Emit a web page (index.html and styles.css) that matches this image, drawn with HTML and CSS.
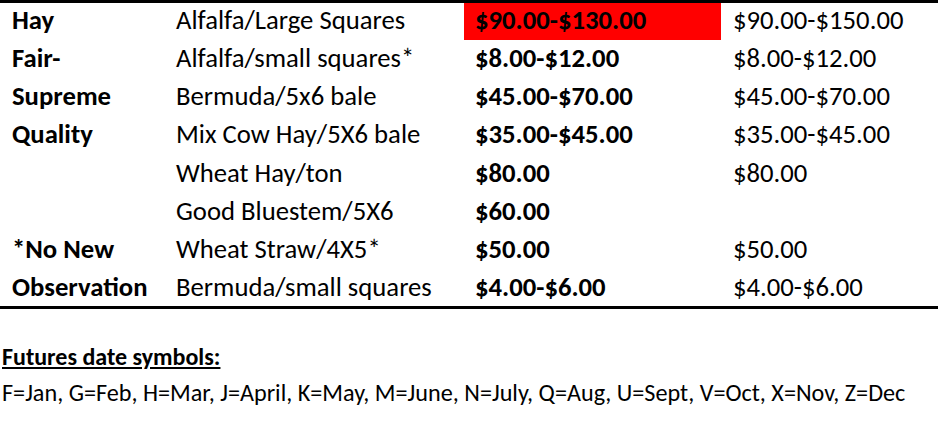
FILE: index.html
```html
<!DOCTYPE html>
<html>
<head>
<meta charset="utf-8">
<link rel="stylesheet" href="styles.css">
</head>
<body>
<table class="hay">
  <colgroup>
    <col class="c1"><col class="c2"><col class="c3"><col class="c4">
  </colgroup>
  <tr><td class="cat">Hay</td><td>Alfalfa/Large Squares</td><td class="cur hot">$90.00-$130.00</td><td>$90.00-$150.00</td></tr>
  <tr><td class="cat">Fair-</td><td>Alfalfa/small squares*</td><td class="cur">$8.00-$12.00</td><td>$8.00-$12.00</td></tr>
  <tr><td class="cat">Supreme</td><td>Bermuda/5x6 bale</td><td class="cur">$45.00-$70.00</td><td>$45.00-$70.00</td></tr>
  <tr><td class="cat">Quality</td><td>Mix Cow Hay/5X6 bale</td><td class="cur">$35.00-$45.00</td><td>$35.00-$45.00</td></tr>
  <tr><td class="cat"></td><td>Wheat Hay/ton</td><td class="cur">$80.00</td><td>$80.00</td></tr>
  <tr><td class="cat"></td><td>Good Bluestem/5X6</td><td class="cur">$60.00</td><td></td></tr>
  <tr><td class="cat">*No New</td><td>Wheat Straw/4X5*</td><td class="cur">$50.00</td><td>$50.00</td></tr>
  <tr><td class="cat">Observation</td><td>Bermuda/small squares</td><td class="cur">$4.00-$6.00</td><td>$4.00-$6.00</td></tr>
</table>
<div class="notes">
  <div class="notes-title">Futures date symbols:</div>
  <div class="notes-text">F=Jan, G=Feb, H=Mar, J=April, K=May, M=June, N=July, Q=Aug, U=Sept, V=Oct, X=Nov, Z=Dec</div>
</div>
</body>
</html>
```
FILE: styles.css
```css
html, body {
  margin: 0;
  padding: 0;
  background: #ffffff;
}
body {
  font-family: Carlito, Lato, "Liberation Sans", sans-serif;
  color: #000000;
  width: 938px;
}
.hay {
  width: 938px;
  border-collapse: collapse;
  table-layout: fixed;
  border-top: 3px solid #000;
  border-bottom: 3px solid #000;
  font-size: 26.7px;
}
.c1 { width: 164px; }
.c2 { width: 300px; }
.c3 { width: 257px; }
.c4 { width: 217px; }
.hay td {
  height: 38.25px;
  padding: 0 0 1px 12px;
  line-height: 35px;
  white-space: nowrap;
  overflow: hidden;
  box-sizing: border-box;
}
.hay td.cur { padding-left: 11px; }
.cat, .cur { font-weight: bold; }
.hot { background: #ff0000; }
.notes {
  padding: 32px 0 0 2px;
}
.notes-title {
  font-size: 24px;
  font-weight: bold;
  text-decoration: underline;
  line-height: 31px;
}
.notes-text {
  font-size: 24.2px;
  line-height: 36px;
  margin-top: 3px;
  white-space: nowrap;
}
```
